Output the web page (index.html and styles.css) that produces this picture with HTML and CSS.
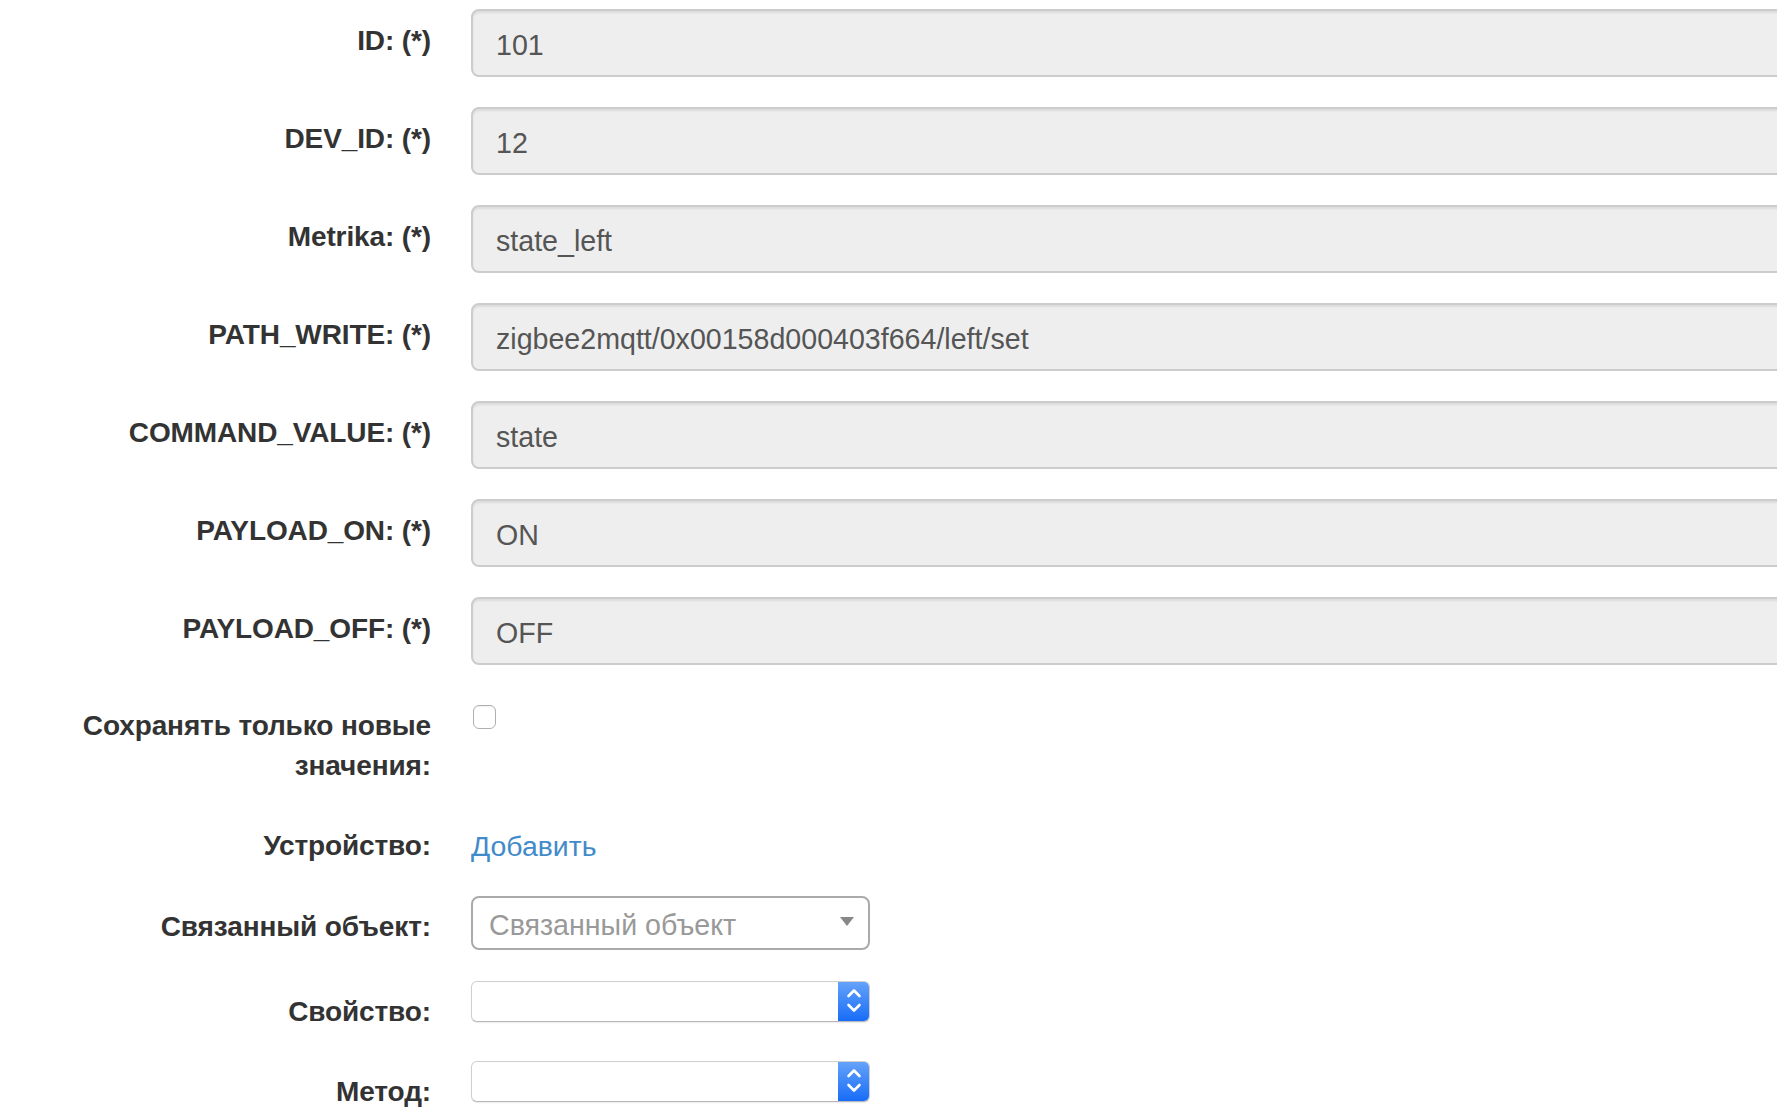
FILE: index.html
```html
<!DOCTYPE html>
<html lang="ru">
<head>
<meta charset="utf-8">
<title>Form</title>
<link rel="stylesheet" href="styles.css">
</head>
<body>
<form class="form">
  <div class="row">
    <label class="lbl">ID: (*)</label>
    <div class="ctl"><input class="form-control" type="text" value="101" readonly></div>
  </div>
  <div class="row">
    <label class="lbl">DEV_ID: (*)</label>
    <div class="ctl"><input class="form-control" type="text" value="12" readonly></div>
  </div>
  <div class="row">
    <label class="lbl">Metrika: (*)</label>
    <div class="ctl"><input class="form-control" type="text" value="state_left" readonly></div>
  </div>
  <div class="row">
    <label class="lbl">PATH_WRITE: (*)</label>
    <div class="ctl"><input class="form-control" type="text" value="zigbee2mqtt/0x00158d000403f664/left/set" readonly></div>
  </div>
  <div class="row">
    <label class="lbl">COMMAND_VALUE: (*)</label>
    <div class="ctl"><input class="form-control" type="text" value="state" readonly></div>
  </div>
  <div class="row">
    <label class="lbl">PAYLOAD_ON: (*)</label>
    <div class="ctl"><input class="form-control" type="text" value="ON" readonly></div>
  </div>
  <div class="row">
    <label class="lbl">PAYLOAD_OFF: (*)</label>
    <div class="ctl"><input class="form-control" type="text" value="OFF" readonly></div>
  </div>
  <div class="row row-check">
    <label class="lbl">Сохранять только новые значения:</label>
    <div class="ctl"><input class="checkbox" type="checkbox"></div>
  </div>
  <div class="row row-static">
    <label class="lbl">Устройство:</label>
    <div class="ctl"><a class="link" href="#">Добавить</a></div>
  </div>
  <div class="row row-s2">
    <label class="lbl">Связанный объект:</label>
    <div class="ctl">
      <div class="select2"><span class="placeholder">Связанный объект</span><span class="arrow"></span></div>
    </div>
  </div>
  <div class="row row-native">
    <label class="lbl">Свойство:</label>
    <div class="ctl">
      <div class="native-select">
        <span class="stepper">
          <svg width="32" height="41" viewBox="0 0 32 41"><path d="M10.5 15 L16 9.5 L21.5 15" fill="none" stroke="#fff" stroke-width="2.6" stroke-linecap="round" stroke-linejoin="round"/><path d="M10.5 24 L16 29.5 L21.5 24" fill="none" stroke="#fff" stroke-width="2.6" stroke-linecap="round" stroke-linejoin="round"/></svg>
        </span>
      </div>
    </div>
  </div>
  <div class="row row-native row-last">
    <label class="lbl">Метод:</label>
    <div class="ctl">
      <div class="native-select">
        <span class="stepper">
          <svg width="32" height="41" viewBox="0 0 32 41"><path d="M10.5 15 L16 9.5 L21.5 15" fill="none" stroke="#fff" stroke-width="2.6" stroke-linecap="round" stroke-linejoin="round"/><path d="M10.5 24 L16 29.5 L21.5 24" fill="none" stroke="#fff" stroke-width="2.6" stroke-linecap="round" stroke-linejoin="round"/></svg>
        </span>
      </div>
    </div>
  </div>
</form>
</body>
</html>
```
FILE: styles.css
```css
html, body {
  margin: 0;
  padding: 0;
  background: #fff;
  overflow: hidden;
}

body {
  font-family: "Liberation Sans", Arial, Helvetica, sans-serif;
  color: #333;
}

.form {
  padding-top: 9px;
  margin: 0;
}

.row {
  display: grid;
  grid-template-columns: 431px 1400px;
  column-gap: 40px;
  margin-bottom: 30px;
}

.lbl {
  display: block;
  font-weight: bold;
  font-size: 28px;
  line-height: 40px;
  letter-spacing: -0.12px;
  text-align: right;
  padding-top: 12px;
  color: #333;
}

.ctl {
  min-width: 0;
}

.form-control {
  box-sizing: border-box;
  display: block;
  width: 100%;
  height: 68px;
  margin: 0;
  padding: 14px 23px 10px 23px;
  font-family: "Liberation Sans", Arial, Helvetica, sans-serif;
  font-size: 28.6px;
  color: #555;
  background: #eee;
  border: 2px solid #ccc;
  border-radius: 8px;
  box-shadow: inset 0 2px 2px rgba(0, 0, 0, 0.075);
  outline: none;
}

/* checkbox row */
.row-check .lbl {
  padding-top: 11px;
}

.checkbox {
  appearance: none;
  -webkit-appearance: none;
  box-sizing: border-box;
  display: block;
  width: 23px;
  height: 24px;
  margin: 10px 0 0 2px;
  border: 1.5px solid #b0b0b0;
  border-radius: 6px;
  background: #fff;
  box-shadow: inset 0 1px 1px rgba(0, 0, 0, 0.06);
}

/* static row */
.row-static .lbl {
  padding-top: 10px;
}

.link {
  display: block;
  padding-top: 10px;
  font-size: 28.4px;
  line-height: 40px;
  color: #428bca;
  text-decoration: none;
}

/* select2-like control */
.row-s2 .lbl {
  padding-top: 11px;
}

.select2 {
  box-sizing: border-box;
  width: 399px;
  height: 54px;
  display: flex;
  align-items: center;
  justify-content: space-between;
  padding: 0 14px 0 16px;
  border: 2px solid #aaa;
  border-radius: 8px;
  background: #fff;
}

.placeholder {
  font-size: 28.6px;
  color: #999;
  padding-top: 4px;
}

.arrow {
  width: 0;
  height: 0;
  border-left: 7px solid transparent;
  border-right: 7px solid transparent;
  border-top: 9px solid #888;
  margin-bottom: 4px;
}

/* native select (macOS look) */
.row-native .lbl {
  padding-top: 12px;
}

.row-last .lbl {
  padding-top: 10px;
}

.native-select {
  box-sizing: border-box;
  width: 399px;
  height: 41px;
  margin-top: 1px;
  display: flex;
  justify-content: flex-end;
  border: 1px solid #cfcfcf;
  border-bottom-color: #b9b9b9;
  border-radius: 6px;
  background: #fff;
  box-shadow: 0 1px 1px rgba(0, 0, 0, 0.08);
  overflow: hidden;
}

.row-last .native-select {
  margin-top: -1px;
}

.stepper {
  display: block;
  width: 32px;
  height: 41px;
  margin: -1px -1px -1px 0;
  background: linear-gradient(#66a3fa, #166bf7);
}

.stepper svg {
  display: block;
}
```
